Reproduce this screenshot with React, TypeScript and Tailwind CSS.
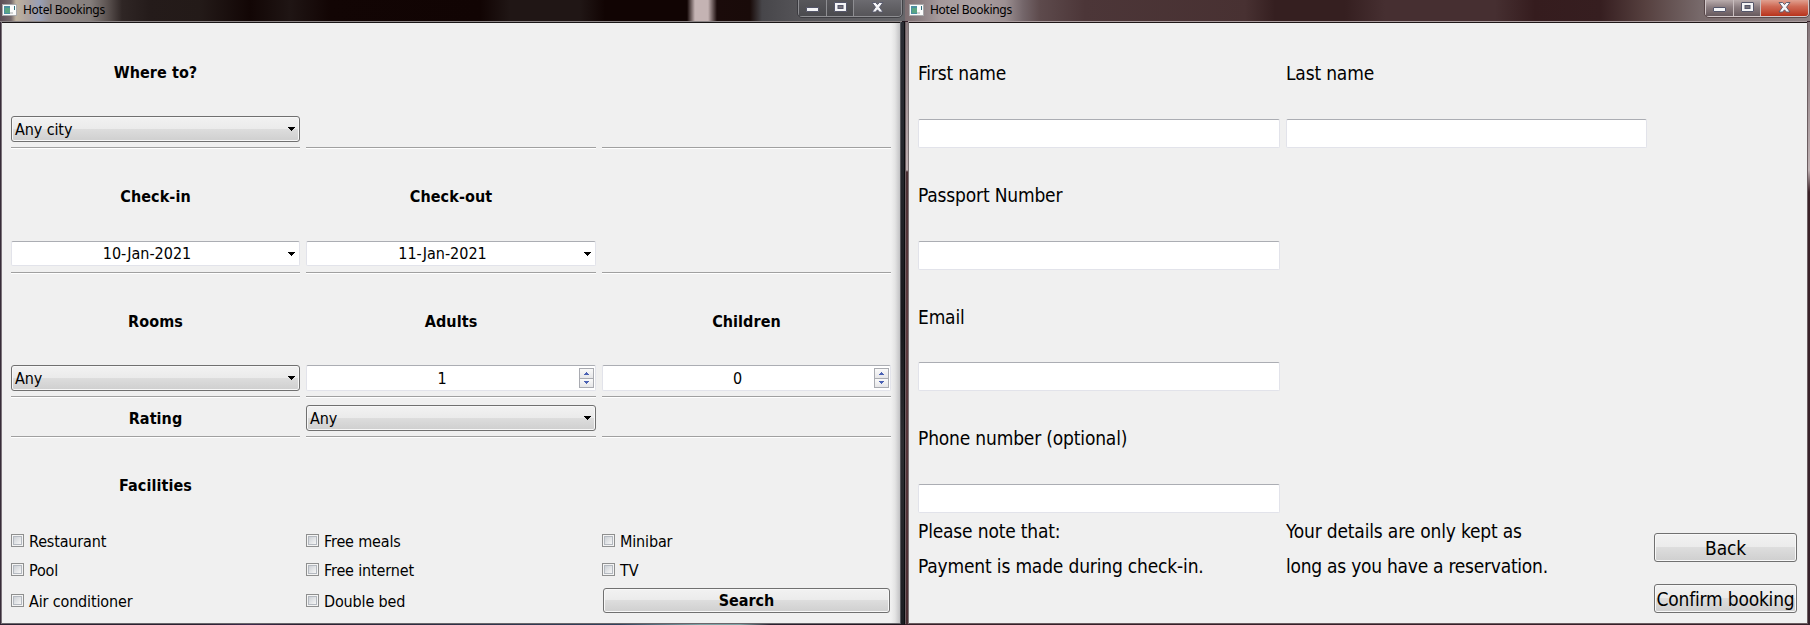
import type { ReactNode } from "react";

function AppIcon() {
  return (
    <svg width="15" height="12" viewBox="0 0 15 12" shapeRendering="crispEdges" className="shrink-0">
      <rect width="15" height="12" fill="#a9a9ab" />
      <rect x="1" y="1" width="13" height="10" fill="#fbfbfb" />
      <rect x="2" y="2" width="6" height="8" fill="#4b8fa0" />
      <rect x="3" y="4" width="5" height="5" fill="#5aa583" />
      <rect x="8" y="8" width="3" height="2" fill="#d0d2d2" />
      <rect x="12" y="2" width="1" height="4" fill="#2f6f7c" />
    </svg>
  );
}

function MinimizeGlyph() {
  return (
    <svg width="13" height="6" viewBox="0 0 13 6" className="block">
      <rect x="0.5" y="0.5" width="12" height="4" rx="0.5" fill="#f4f4f6" stroke="#54566a" />
    </svg>
  );
}

function MaximizeGlyph() {
  return (
    <svg width="13" height="11" viewBox="0 0 13 11" className="block">
      <rect x="0.5" y="0.5" width="12" height="9" rx="0.5" fill="#f4f4f6" stroke="#54566a" />
      <rect x="4" y="3.5" width="5" height="3" fill="#77737a" stroke="#54566a" />
    </svg>
  );
}

function CloseGlyph() {
  return (
    <svg width="13" height="11" viewBox="0 0 13 11" className="block">
      <path d="M1 .5H4.6L6.5 2.6 8.4 .5H12L8.5 5.2 12 10H8.4L6.5 7.8 4.6 10H1L4.5 5.2Z" fill="#f6f6f8" stroke="#54566a" strokeWidth="0.9" />
    </svg>
  );
}

function Controls({ active }: { active?: boolean }) {
  const box = active
    ? "flex h-[17px] rounded-b-[4px] border border-t-0 border-[#d2c8c9] outline outline-[#3e2b2d]/60"
    : "flex h-[17px] rounded-b-[4px] border border-t-0 border-[#8e8e92] outline outline-[#2a2a2e]/60";
  const btn = active
    ? "border-r border-[#c9bebf] bg-linear-to-b from-[#b9acad] from-0% via-[#8a7c7f] via-45% to-[#675a5e]"
    : "border-r border-[#8e8e92] bg-linear-to-b from-[#58575b] to-[#4a4a4e]";
  const close = active
    ? "bg-linear-to-b from-[#e0a090] from-0% via-[#cf6a55] via-40% to-[#b8321a]"
    : "bg-linear-to-b from-[#6c6b70] to-[#565559]";
  return (
    <div className={box}>
      <div className={`flex w-[28px] justify-center pt-[7px] ${btn}`}>
        <MinimizeGlyph />
      </div>
      <div className={`flex w-[27px] justify-center pt-[2px] ${btn}`}>
        <MaximizeGlyph />
      </div>
      <div className={`flex w-[47px] justify-center rounded-br-[3px] pt-[2px] ${close}`}>
        <CloseGlyph />
      </div>
    </div>
  );
}

function Caption() {
  return (
    <span className="font-['Noto_Sans',sans-serif] text-[12px] leading-[18px] tracking-[-0.28px] whitespace-nowrap text-black">
      Hotel Bookings
    </span>
  );
}

function Arrow() {
  return (
    <svg width="7" height="4" viewBox="0 0 7 4" shapeRendering="crispEdges" className="shrink-0">
      <path d="M0 0H7V1H6V2H5V3H4V4H3V3H2V2H1V1H0Z" fill="#000" />
    </svg>
  );
}

const raised =
  "rounded-[3px] border border-[#707070] bg-[linear-gradient(#f2f2f2_0%,#ebebeb_48%,#dddddd_50%,#cfcfcf_100%)] shadow-[inset_0_0_0_1px_#f8f8f8]";
const sunken = "rounded-[2px] border border-[#e2e3ea] border-t-[#abadb3] bg-white";

function Heading({ children, className = "" }: { children?: ReactNode; className?: string }) {
  return <div className={`flex items-center justify-center font-bold tracking-[0.08px] ${className}`}>{children}</div>;
}

function Combo({ value }: { value: string }) {
  return (
    <div className={`flex items-center justify-between pr-[4px] pl-[3px] leading-[23px] ${raised}`}>
      <span className="pt-px tracking-[-0.1px]">{value}</span>
      <Arrow />
    </div>
  );
}

function DateField({ value }: { value: string }) {
  return (
    <div className={`flex items-center pr-[4px] leading-[23px] ${sunken}`}>
      <span className="flex-1 pr-[6px] text-center">{value}</span>
      <Arrow />
    </div>
  );
}

function StepButton({ up }: { up?: boolean }) {
  return (
    <div className="flex flex-1 items-center justify-center bg-linear-to-b from-[#fafafa] to-[#e6e6e8]">
      <svg width="5" height="3" viewBox="0 0 5 3" shapeRendering="crispEdges">
        <path d={up ? "M2 0H3V1H4V2H5V3H0V2H1V1H2Z" : "M0 0H5V1H4V2H3V3H2V2H1V1H0Z"} fill="#4b62b4" />
      </svg>
    </div>
  );
}

function SpinField({ value }: { value: number }) {
  return (
    <div className={`flex items-center pr-px leading-[23px] ${sunken}`}>
      <span className="flex-1 pr-[2px] text-center">{value}</span>
      <div className="flex h-[20px] w-[15px] flex-col divide-y divide-[#a9abb1] border border-[#a9abb1]">
        <StepButton up />
        <StepButton />
      </div>
    </div>
  );
}

function Rule() {
  return <div className="h-[2px] border-t border-[#a0a0a0] bg-white" />;
}

function Check({ label }: { label: string }) {
  return (
    <div className="flex h-[13px] items-center gap-[5px] leading-[13px]">
      <span className="flex size-[13px] shrink-0 items-center justify-center border border-[#8e8f8f] bg-[#f4f4f4]">
        <span className="size-[9px] border border-[#b4b9c0] bg-linear-to-br from-[#cdd1d6] to-[#f6f6f6]" />
      </span>
      <span className="pt-[2px] tracking-[-0.15px] whitespace-nowrap">{label}</span>
    </div>
  );
}

const columns = "grid grid-cols-[289px_290px_289px] gap-x-[6px]";

function Rules() {
  return (
    <div className={columns}>
      <Rule />
      <Rule />
      <Rule />
    </div>
  );
}

function SearchWindow() {
  return (
    <section className="flex h-[625px] w-[905px] shrink-0 flex-col bg-[linear-gradient(90deg,#2b2131_0px,#2b2131_200px,#3c2a4c_250px,#2b2131_300px,#32425e_620px,#7fa3a6_700px,#7fa3a6_740px,#2b2131_770px,#20141c_100%)]">
      <header className="flex h-[21px] justify-between bg-[linear-gradient(90deg,#5b4d55_0px,#75696c_11px,#c0b3a0_16px,#a9a0a0_30px,#98a0b8_39px,#948d8c_50px,#857e7c_90px,#5d5452_107px,#2f2625_122px,#241b1a_150px,#231a18_200px,#120605_250px,#1f1514_290px,#120504_330px,#110403_480px,#201615_510px,#201615_580px,#110403_605px,#110403_687px,#c4b3b3_695px,#c4b3b3_708px,#1a0b0a_717px,#190b09_750px,#47464a_762px,#555458_800px,#66666a_100%)] pr-[3px] pl-[2px]">
        <div className="flex items-center gap-[6px] pb-px">
          <AppIcon />
          <Caption />
        </div>
        <Controls />
      </header>
      <div className="mr-[3px] h-px shrink-0 bg-[#8b8586]" />
      <div className="flex h-[602px] shrink-0">
        <div className="w-px bg-[#382c38]" />
        <div className="w-px bg-[#7a7279]" />
        <main className="w-[898px] border-t border-b border-t-[#1a1617] border-b-[#6a676b] bg-[linear-gradient(90deg,#f0f0f0_889px,#e4e4e4_893px,#c2c2c4_898px)] pl-[9px] text-[16px] text-black">
          <Heading className="h-[93px] w-[289px] pt-[6px]">Where to?</Heading>
          <div className={`h-[25px] ${columns}`}>
            <Combo value="Any city" />
          </div>
          <div className="h-[6px]" />
          <Rules />
          <div className={`h-[92px] ${columns}`}>
            <Heading className="pt-[3px]">Check-in</Heading>
            <Heading className="pt-[3px]">Check-out</Heading>
          </div>
          <div className={`h-[25px] ${columns}`}>
            <DateField value="10-Jan-2021" />
            <DateField value="11-Jan-2021" />
          </div>
          <div className="h-[6px]" />
          <Rules />
          <div className={`h-[91px] ${columns}`}>
            <Heading className="pt-[4px]">Rooms</Heading>
            <Heading className="pt-[4px]">Adults</Heading>
            <Heading className="pt-[4px]">Children</Heading>
          </div>
          <div className={`h-[25px] ${columns}`}>
            <Combo value="Any" />
            <SpinField value={1} />
            <SpinField value={0} />
          </div>
          <div className="h-[6px]" />
          <Rules />
          <div className="h-[7px]" />
          <div className={`h-[25px] ${columns}`}>
            <Heading className="pt-[2px]">Rating</Heading>
            <Combo value="Any" />
          </div>
          <div className="h-[6px]" />
          <Rules />
          <Heading className="h-[96px] w-[289px]">Facilities</Heading>
          <div className={`h-[29px] ${columns}`}>
            <Check label="Restaurant" />
            <Check label="Free meals" />
            <Check label="Minibar" />
          </div>
          <div className={`h-[25px] ${columns}`}>
            <Check label="Pool" />
            <Check label="Free internet" />
            <Check label="TV" />
          </div>
          <div className={`h-[25px] items-center ${columns}`}>
            <Check label="Air conditioner" />
            <Check label="Double bed" />
            <div className={`mx-px flex h-[25px] items-center justify-center pt-px font-bold ${raised}`}>Search</div>
          </div>
        </main>
        <div className="w-px bg-[#56565b]" />
        <div className="w-[3px] bg-[linear-gradient(#2a2c33,#26282e_20%,#17181c_50%,#2c2d31_70%,#1c1d22)]" />
        <div className="w-px bg-[#0c0d10]" />
      </div>
      <div className="h-px shrink-0" />
    </section>
  );
}

function TextField({ className = "w-[362px]" }: { className?: string }) {
  return <div className={`h-[29px] ${sunken} ${className}`} />;
}

function FieldLabel({ children, className = "" }: { children: ReactNode; className?: string }) {
  return <div className={`flex w-[368px] items-center whitespace-nowrap ${className}`}>{children}</div>;
}

function BookingWindow() {
  return (
    <section className="flex h-[625px] w-[905px] shrink-0 flex-col bg-[#36202a]">
      <header className="flex h-[21px] justify-between bg-[linear-gradient(90deg,#7d6d70_0px,#8b7e81_15px,#a79c9e_35px,#aba0a2_70px,#9c9092_100px,#74666a_118px,#5d4a4c_135px,#4c3638_180px,#483132_340px,#351f20_370px,#351f20_440px,#462f31_480px,#462f31_590px,#351c1e_630px,#361e20_695px,#56403f_740px,#77696a_795px,#8f8284_100%)] pr-px pl-[4px]">
        <div className="flex items-center gap-[6px] pb-px">
          <AppIcon />
          <Caption />
        </div>
        <Controls active />
      </header>
      <div className="mx-[3px] h-px shrink-0 bg-[#a99c9e]" />
      <div className="flex h-[602px] shrink-0">
        <div className="w-px bg-[#6d5f63]" />
        <div className="w-[2px] bg-[linear-gradient(#8b7b7e_0px,#bfb0b2_148px,#4b2f33_150px,#5c3a3e_300px,#4a2c31_100%)]" />
        <div className="w-px bg-[#7d7376]" />
        <main className="w-[898px] border-t border-b border-t-[#1f1718] border-b-[#6b5d60] bg-[#f0f0f0] pl-[9px] text-[19px] tracking-[-0.17px] text-black">
          <div className="flex h-[96px] pt-[5px]">
            <FieldLabel>First name</FieldLabel>
            <FieldLabel>Last name</FieldLabel>
          </div>
          <div className="flex gap-[6px]">
            <TextField />
            <TextField className="w-[361px]" />
          </div>
          <FieldLabel className="h-[93px] pt-[2px]">Passport Number</FieldLabel>
          <TextField />
          <FieldLabel className="h-[92px] pt-[2px]">Email</FieldLabel>
          <TextField />
          <FieldLabel className="h-[93px] pt-[2px]">Phone number (optional)</FieldLabel>
          <TextField />
          <div className="flex justify-between pr-[10px]">
            <div className="flex pt-[1px] leading-[35px]">
              <div className="w-[368px] whitespace-nowrap">
                <p>Please note that:</p>
                <p>Payment is made during check-in.</p>
              </div>
              <div className="whitespace-nowrap">
                <p>Your details are only kept as</p>
                <p className="tracking-[-0.25px]">long as you have a reservation.</p>
              </div>
            </div>
            <div className="flex w-[143px] flex-col gap-[22px] pt-[20px]">
              <div className={`flex h-[29px] items-center justify-center pt-[2px] ${raised}`}>Back</div>
              <div className={`flex h-[29px] items-center justify-center pt-[2px] tracking-[-0.2px] whitespace-nowrap ${raised}`}>
                Confirm booking
              </div>
            </div>
          </div>
        </main>
        <div className="w-px bg-[#6b5d60]" />
        <div className="w-[2px] bg-[linear-gradient(#84767a_0px,#bfb0b2_148px,#3a2027_170px,#35202a_100%)]" />
      </div>
      <div className="h-px shrink-0" />
    </section>
  );
}

export default function App() {
  return (
    <div className="flex h-[625px] w-[1810px] overflow-hidden bg-black font-['DejaVu_Sans_Condensed','DejaVu_Sans',sans-serif] [font-stretch:condensed]">
      <SearchWindow />
      <BookingWindow />
    </div>
  );
}
